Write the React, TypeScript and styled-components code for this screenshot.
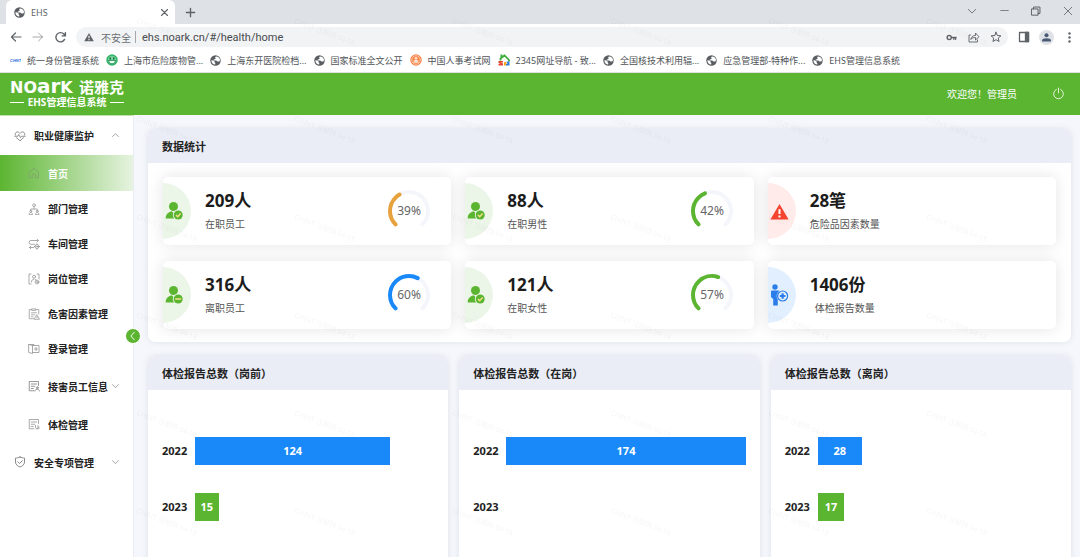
import React, { useState } from 'react';
import styled, { createGlobalStyle } from 'styled-components';

const GREEN = '#5cb531';
const BLUE = '#1989fa';
const ORANGE = '#e8a23d';
const sans = '"Noto Sans", "Noto Sans CJK SC", sans-serif';

const Global = createGlobalStyle`
  *, *::before, *::after { box-sizing: border-box; }
  body { margin: 0; font-family: ${sans}; font-size: 10px; color: #222; background: #f5f7fc; }
  button { border: 0; padding: 0; margin: 0; background: none; font: inherit; color: inherit; cursor: pointer; }
  a { color: inherit; text-decoration: none; }
  ul { list-style: none; margin: 0; padding: 0; }
  h1, h2, p { margin: 0; font: inherit; }
  svg { display: block; flex: none; }
`;

const Page = styled.div`
  position: relative;
  display: flex;
  flex-direction: column;
  height: 100vh;
  overflow: hidden;
`;

/* ---------- browser chrome ---------- */

const TabStrip = styled.div`
  display: flex;
  align-items: stretch;
  height: 24px;
  flex: none;
  padding-left: 6px;
  background: #dee1e6;
`;

const Tab = styled.div`
  display: flex;
  align-items: center;
  gap: 6px;
  width: 169px;
  padding: 0 7px 0 8px;
  border-radius: 6px 6px 0 0;
  background: #fff;
  color: #5f6368;
  font-size: 9px;
`;

const TabTitle = styled.span`
  flex: 1;
`;

const IconButton = styled.button<{ $w?: number }>`
  display: flex;
  align-items: center;
  justify-content: center;
  width: ${(p) => p.$w ?? 12}px;
  flex: none;
  color: #5f6368;
`;

const WindowControls = styled.div`
  display: flex;
  align-items: center;
  margin-left: auto;
  padding-bottom: 3px;
  margin-right: -4px;
`;

const Toolbar = styled.div`
  display: flex;
  align-items: center;
  height: 25px;
  flex: none;
  padding: 1px 0 0 4px;
  background: #fff;
`;

const AddressBar = styled.div`
  display: flex;
  align-items: center;
  flex: 1;
  height: 20px;
  margin: 0 4px 0 4px;
  padding: 0 1px 0 8px;
  border-radius: 10px;
  background: #f1f3f4;
  color: #6b6f74;
`;

const Insecure = styled.label`
  display: flex;
  align-items: center;
  gap: 7px;
  white-space: nowrap;

  &::after {
    content: '';
    width: 1px;
    height: 12px;
    background: #a5a8ab;
    margin-left: -3px;
  }
`;

const UrlInput = styled.input`
  flex: 1;
  min-width: 0;
  border: 0;
  outline: 0;
  padding: 0;
  margin-left: 6px;
  background: transparent;
  color: #484b4f;
  font: 11px Roboto, ${sans};
`;

const Avatar = styled.span`
  display: flex;
  align-items: center;
  justify-content: center;
  width: 15px;
  height: 15px;
  border-radius: 50%;
  background: #dee1e6;
  color: #4b5a74;
`;

const Bookmarks = styled.nav`
  display: flex;
  align-items: center;
  gap: 7px;
  height: 24px;
  flex: none;
  padding: 0 10px 1px;
  border-bottom: 1px solid #dcdee0;
  background: #fff;
`;

const Bookmark = styled.a`
  display: flex;
  align-items: center;
  gap: 6px;
  white-space: nowrap;
  color: #505357;
  font-size: 9px;
`;

/* ---------- application frame ---------- */

const Header = styled.header`
  display: flex;
  align-items: center;
  height: 42px;
  flex: none;
  padding: 0 15px 1px 10px;
  background: ${GREEN};
  color: #fff;
`;

const Brand = styled.h1`
  display: flex;
  flex-direction: column;
  gap: 1px;
  width: 114px;
`;

const BrandTop = styled.span`
  display: flex;
  align-items: center;
  justify-content: space-between;
  height: 16px;
  line-height: 16px;
  font-size: 15px;
  font-weight: 700;
  white-space: nowrap;
`;

const Wordmark = styled.span`
  font-family: "DejaVu Sans", sans-serif;
  font-size: 16px;
`;

const TallLetters = styled.span`
  font-size: 20px;
  line-height: 16px;
`;

const BrandSub = styled.span`
  display: flex;
  align-items: center;
  gap: 4px;
  height: 13px;
  font-weight: 700;
  line-height: 13px;
  white-space: nowrap;

  &::before, &::after {
    content: '';
    flex: 1;
    height: 1px;
    background: #fff;
  }
`;

const Welcome = styled.span`
  margin-left: auto;
  margin-right: 35px;
`;

const Body = styled.div`
  display: flex;
  flex: 1;
  min-height: 0;
`;

const Sidebar = styled.aside`
  position: relative;
  width: 134px;
  flex: none;
  background: #fff;
  border-top: 1px solid #bfe2ad;
  border-right: 1px solid #e9ecf3;
`;

const GroupButton = styled.button<{ $h: number; $inset?: boolean }>`
  display: flex;
  align-items: center;
  gap: 8px;
  width: 100%;
  height: ${(p) => p.$h}px;
  padding: 0 13px 0 ${(p) => (p.$inset ? 28 : 14)}px;
  font-weight: 700;
  text-align: left;
  white-space: nowrap;

  & > svg { color: #858585; }
  & > span { flex: 1; min-width: 0; }
`;

const NavLink = styled.a<{ $active?: boolean; $tall?: boolean }>`
  display: flex;
  align-items: center;
  gap: 8px;
  height: ${(p) => (p.$tall ? 38 : p.$active ? 36 : 35)}px;
  padding-left: 28px;
  font-weight: 700;
  color: ${(p) => (p.$active ? '#fff' : '#222')};
  background: ${(p) => (p.$active ? `linear-gradient(90deg, ${GREEN}, #e6f3e0)` : 'none')};

  & > svg { color: ${(p) => (p.$active ? '#7fa56d' : '#9a9a9a')}; }
`;

const SubList = styled.ul`
  padding-bottom: 1px;
`;

const Collapse = styled.button`
  position: absolute;
  top: 212px;
  right: -8px;
  z-index: 2;
  display: flex;
  align-items: center;
  justify-content: center;
  width: 16px;
  height: 16px;
  border: 1px solid #fff;
  border-radius: 50%;
  background: ${GREEN};
  color: #fff;
`;

const Main = styled.main`
  display: flex;
  flex-direction: column;
  gap: 14px;
  flex: 1;
  min-width: 0;
  padding: 14px 9px 14px 14px;
  overflow-y: auto;
  scrollbar-width: none;
  background: #f5f7fc;
`;

const Panel = styled.section`
  flex: none;
  border-radius: 7px;
  overflow: hidden;
  background: #fff;
  box-shadow: 0 0 6px rgba(60, 70, 100, 0.12);
`;

const PanelTitle = styled.h2`
  height: 34px;
  padding: 0 14px;
  line-height: 36px;
  font-size: 11px;
  font-weight: 700;
  background: #eaedf6;
`;

const StatGrid = styled.div`
  display: grid;
  grid-template-columns: repeat(3, 1fr);
  gap: 16px 14px;
  padding: 14px 15px 13px 15px;
`;

const StatCard = styled.article`
  display: flex;
  align-items: center;
  height: 68px;
  padding-right: 20px;
  border-radius: 5px;
  background: #fff;
  box-shadow: 0 0 16px rgba(0, 0, 0, 0.11);
`;

const HalfDisc = styled.div<{ $tint: string }>`
  display: flex;
  align-items: center;
  width: 28px;
  height: 56px;
  padding-left: 2px;
  border-radius: 0 28px 28px 0;
  background: ${(p) => p.$tint};
`;

const StatText = styled.div`
  flex: 1;
  margin-left: 14px;
`;

const StatValue = styled.p`
  line-height: 24px;
  font-size: 17px;
  font-weight: 700;
  color: #1c1c1c;
`;

const StatLabel = styled.p`
  margin-top: 2px;
  line-height: 18px;
  color: #555;
`;

const ChartRow = styled.div`
  display: grid;
  grid-template-columns: repeat(3, 1fr);
  gap: 11px;
  flex: none;
`;

const Chart = styled.div`
  display: flex;
  flex-direction: column;
  gap: 28px;
  min-height: 240px;
  padding: 47px 14px;
`;

const BarRow = styled.div`
  display: flex;
  height: 28px;
  line-height: 28px;
  font-size: 11px;
  font-weight: 700;
`;

const Year = styled.span`
  width: 33px;
  flex: none;
`;

const Track = styled.div`
  flex: 1;
`;

const Bar = styled.div<{ $color: string }>`
  text-align: center;
  color: #fff;
  background: ${(p) => p.$color};
`;

const Watermarks = styled.div`
  position: absolute;
  inset: 0 0 0 137px;
  z-index: 3;
  display: grid;
  grid-template-columns: repeat(6, 158px);
  grid-auto-rows: 98px;
  padding-top: 12px;
  overflow: hidden;
  pointer-events: none;
  color: rgba(0, 0, 0, 0.045);
  font-size: 7px;
  white-space: nowrap;
`;

const Mark = styled.span`
  justify-self: start;
  align-self: start;
  transform: rotate(21deg);
  transform-origin: 0 50%;
  margin-top: 3px;
`;

/* ---------- icons ---------- */

type GlyphProps = { size?: number; sw?: number; children: React.ReactNode };
const Glyph = ({ size = 12, sw = 2, children }: GlyphProps) => (
  <svg width={size} height={size} viewBox="0 0 24 24" fill="none" stroke="currentColor"
    strokeWidth={sw} strokeLinecap="round" strokeLinejoin="round" aria-hidden="true">{children}</svg>
);

const Globe = () => (
  <svg width="11" height="11" viewBox="0 0 22 22" aria-hidden="true">
    <circle cx="11" cy="11" r="10.5" fill="#5a5e63" />
    <path d="M12 3c-2 1-2 2-1 3 1 1-1 3-3 3-1 0-1 2 1 2h3c2 0 2 2 3 2l3 0c1.5-.4 2-1.800 2-3.500C19.500 6 16.500 3 12 3z" fill="#fff" />
    <path d="M2.800 10.500c2 .2 5 .8 6 2 1 1.300-.2 2 1 3 1.200.8.800 2.500.4 3.700C6 18.800 2.700 15.500 2.800 10.500z" fill="#fff" />
  </svg>
);

const Chint = () => (
  <svg width="11" height="11" viewBox="0 0 11 11" aria-hidden="true">
    <text x="0" y="7" fontSize="4" fontWeight="700" fontStyle="italic" fontFamily="Liberation Sans, sans-serif" fill="#1766d6">CHNT</text>
  </svg>
);

const Smiley = () => (
  <svg width="12" height="12" viewBox="0 0 24 24" aria-hidden="true">
    <circle cx="12" cy="12" r="11.500" fill="#36b56c" />
    <circle cx="12" cy="12" r="8" fill="#7bd39f" />
    <path d="M7 7h3v4H7zM14 7h3v4h-3z" fill="#11683a" />
    <path d="M5 13h14c-1 5-4 6.500-7 6.500S6 18 5 13z" fill="#eafff2" stroke="#168349" strokeWidth="1.500" />
  </svg>
);

const OrangeSeal = () => (
  <svg width="12" height="12" viewBox="0 0 24 24" aria-hidden="true">
    <circle cx="12" cy="12" r="11.500" fill="#f58549" />
    <circle cx="12" cy="12" r="8.500" fill="none" stroke="#ffd3b8" strokeWidth="1.500" />
    <circle cx="12" cy="8.500" r="2.500" fill="#ffe3d2" />
    <path d="M7 17l3-5h4l3 5zM6 12l3 1M18 12l-3 1" fill="#ffe3d2" stroke="#ffe3d2" />
  </svg>
);

const House2345 = () => (
  <svg width="12" height="12" viewBox="0 0 24 24" aria-hidden="true">
    <path d="M5 13V9l8-6 9 9v3" fill="none" stroke="#3eac38" strokeWidth="3.500" />
    <path d="M5 1h4v5H5z" fill="#3eac38" />
    <path d="M1 14h9v3H5l5 2v4H1v-3h4l-4-2z" fill="#e5452f" />
    <path d="M12 16h5v7h-5z" fill="#f6a71c" />
    <path d="M17 15h6v8h-7v-3h3z" fill="#2e7ddb" />
  </svg>
);

const Warning = ({ size, color }: { size: number; color: string }) => (
  <svg width={size} height={size} viewBox="0 0 24 24" aria-hidden="true">
    <path d="M12 2.500L23.500 22H.5z" fill={color} strokeLinejoin="round" />
    <path d="M12 9v6" stroke="#fff" strokeWidth="2.600" />
    <path d="M12 17v2.600" stroke="#fff" strokeWidth="2.600" />
  </svg>
);

const Chevron = ({ up }: { up?: boolean }) => (
  <Glyph size={9} sw={2}><path d={up ? 'M4 15l8-8 8 8' : 'M4 7l8 8 8-8'} /></Glyph>
);

const HeartIcon = () => (
  <Glyph size={12} sw={1.800}>
    <path d="M2.500 10C1.500 5 6 2.500 9 4.200c1.300.7 2.200 1.600 3 2.500.8-.9 1.700-1.800 3-2.500 3-1.700 7.500.8 6.500 5.800" />
    <path d="M1.500 12.500h6l2-3.500 3.500 6.500 2-3h7.500" />
    <path d="M5 15.500l7 6 7-6" />
  </Glyph>
);
const HomeIcon = () => (
  <Glyph sw={1.800}><path d="M3 10l9-7.500 9 7.500v11.500h-5.500V17a3.500 3.500 0 0 0-7 0v4.500H3z" /></Glyph>
);
const DeptIcon = () => (
  <Glyph sw={1.600}>
    <circle cx="12" cy="4.500" r="2.800" /><path d="M12 7.500V12M5.500 15v-3h13v3" />
    <circle cx="5.500" cy="16.500" r="2" /><path d="M2 22.500c0-5 7-5 7 0z" />
    <circle cx="18.500" cy="16.500" r="2" /><path d="M15 22.500c0-5 7-5 7 0z" />
  </Glyph>
);
const WorkshopIcon = () => (
  <Glyph sw={1.700}>
    <path d="M20 5H6a3.800 3.800 0 0 0 0 7.600h7M18 2.500L21 5l-3 2.500M3 19h8M5.500 16.500L3 19l2.500 2.500" />
    <circle cx="18" cy="17" r="4" /><circle cx="18" cy="17" r="1" />
    <path d="M18 11.500V13M18 21v1.500M12.500 17H14M22 17h1.500" />
  </Glyph>
);
const PostIcon = () => (
  <Glyph sw={1.700}>
    <path d="M6 2H2v20h4M18 2h4v10" /><circle cx="12" cy="7.500" r="3" />
    <path d="M7 18c0-3.500 1.500-5.500 4.500-5.500" /><circle cx="18" cy="18" r="3.800" /><circle cx="18" cy="18" r=".8" />
    <path d="M15 12.500l1 1.500" />
  </Glyph>
);
const HazardIcon = () => (
  <Glyph sw={1.600}>
    <path d="M7 3H2.500v18.500H11M17 3h4.500v9M8 1.800h8v3H8zM7 9.500h10M7 13.500h6M7 17.500h3" />
    <path d="M18 14l5 8.500H13zM18 17.500v2" />
  </Glyph>
);
const LoginIcon = () => (
  <Glyph sw={1.700}>
    <path d="M2 3l7 2v16l-7-2zM9 5h13v14H9M2 3h10v2M13 12h6M16 9v6" />
  </Glyph>
);
const InfoIcon = () => (
  <Glyph sw={1.700}>
    <path d="M21 11V3H2.500v18.500H12M6.500 8h11M6.500 12.500h7M6.500 17h4" />
    <circle cx="18.500" cy="15.500" r="2" /><path d="M14 22c.5-5 8.500-5 9 0" />
  </Glyph>
);
const ExamIcon = () => (
  <Glyph sw={1.700}>
    <path d="M21 11V3H2.500v18.500H12M6.500 8h11M6.500 12.500h7M6.500 17h4" />
    <path d="M15 15v3.500a2.500 2.500 0 0 0 5 0V15M17.500 21.500H22V18" />
  </Glyph>
);
const ShieldIcon = () => (
  <Glyph size={12} sw={1.900}>
    <path d="M12 2c3 1.500 6 2 9 2v8c0 5-4.500 8.500-9 10-4.500-1.500-9-5-9-10V4c3 0 6-.5 9-2z" /><path d="M7.500 11.500l3.500 3.500 6-6" />
  </Glyph>
);

const PersonIcon = ({ minus }: { minus?: boolean }) => (
  <svg width="20" height="20" viewBox="0 0 20 20" aria-hidden="true">
    <circle cx="8.500" cy="5.500" r="4.500" fill={GREEN} />
    <path d="M.7 17.500c0-4 2.300-6.200 5.800-7.200l2.500 2h3.500l-3 5.200z" fill={GREEN} />
    <circle cx="13.200" cy="14" r="5.400" fill="#ebf6e9" />
    <circle cx="13.200" cy="14" r="4.500" fill={GREEN} />
    <path d={minus ? 'M10.200 14h6' : 'M11 14l1.700 1.700 2.900-3.200'} fill="none" stroke="#f7e08a" strokeWidth="1.500" />
  </svg>
);

const ReportIcon = () => (
  <svg width="19" height="22" viewBox="0 0 19 22" aria-hidden="true">
    <circle cx="5" cy="3" r="2.700" fill="#2b7de9" />
    <path d="M1 7.500q0-1 1-1h6.500q1 0 1 1V13l-1.700 2v6q0 .5-.5.500H3.700q-.5 0-.5-.5v-6L1 13z" fill="#2b7de9" />
    <circle cx="12.600" cy="12" r="6" fill="#e1efff" />
    <circle cx="12.600" cy="12" r="5" fill="none" stroke="#2b7de9" strokeWidth="1.200" />
    <path d="M12.600 9.200v5.600M9.800 12h5.600" stroke="#2b7de9" strokeWidth="2.200" />
  </svg>
);

const GaugeText = styled.text`
  font: 12px ${sans};
  fill: #666;
`;

const Gauge = ({ value, color }: { value: number; color: string }) => {
  const arc = 'M8.560 35.440 A19 19 0 1 1 35.440 35.440';
  return (
    <svg width="44" height="44" viewBox="0 0 44 44" role="img" aria-label={`${value}%`}>
      <path d={arc} fill="none" stroke="#f4f6fb" strokeWidth="4" strokeLinecap="round" />
      <path d={arc} fill="none" stroke={color} strokeWidth="4" strokeLinecap="round"
        pathLength={100} strokeDasharray={`${value} 200`} />
      <GaugeText x="22" y="26" textAnchor="middle">{value}%</GaugeText>
    </svg>
  );
};

/* ---------- data ---------- */

const bookmarks: [React.ReactNode, string][] = [
  [<Chint />, '统一身份管理系统'],
  [<Smiley />, '上海市危险废物管...'],
  [<Globe />, '上海东开医院检档...'],
  [<Globe />, '国家标准全文公开'],
  [<OrangeSeal />, '中国人事考试网'],
  [<House2345 />, '2345网址导航 - 致...'],
  [<Globe />, '全国核技术利用辐...'],
  [<Globe />, '应急管理部-特种作...'],
  [<Globe />, 'EHS管理信息系统'],
];

const navItems: [React.ReactNode, string][] = [
  [<HomeIcon />, '首页'],
  [<DeptIcon />, '部门管理'],
  [<WorkshopIcon />, '车间管理'],
  [<PostIcon />, '岗位管理'],
  [<HazardIcon />, '危害因素管理'],
  [<LoginIcon />, '登录管理'],
];

type Stat = { value: string; label: string; tint: string; icon: React.ReactNode; pct?: number; color?: string };
const stats: Stat[] = [
  { value: '209人', label: '在职员工', tint: '#ebf6e9', icon: <PersonIcon />, pct: 39, color: ORANGE },
  { value: '88人', label: '在职男性', tint: '#ebf6e9', icon: <PersonIcon />, pct: 42, color: GREEN },
  { value: '28笔', label: '危险品因素数量', tint: '#ffebea', icon: <Warning size={19} color="#f5432f" /> },
  { value: '316人', label: '离职员工', tint: '#ebf6e9', icon: <PersonIcon minus />, pct: 60, color: BLUE },
  { value: '121人', label: '在职女性', tint: '#ebf6e9', icon: <PersonIcon />, pct: 57, color: GREEN },
  { value: '1406份', label: '\u2002体检报告数量', tint: '#e1efff', icon: <ReportIcon /> },
];

const FULL_SCALE = 152;
const charts: { title: string; bars: [string, number, string][] }[] = [
  { title: '体检报告总数（岗前）', bars: [['2022', 124, BLUE], ['2023', 15, GREEN]] },
  { title: '体检报告总数（在岗）', bars: [['2022', 174, BLUE], ['2023', 0, GREEN]] },
  { title: '体检报告总数（离岗）', bars: [['2022', 28, BLUE], ['2023', 17, GREEN]] },
];

export default function App() {
  const [url, setUrl] = useState('ehs.noark.cn/#/health/home');
  return (
    <Page>
      <Global />
      <TabStrip>
        <Tab>
          <Globe />
          <TabTitle>EHS</TabTitle>
          <IconButton $w={8} aria-label="关闭标签页"><Glyph size={9} sw={3}><path d="M4 4l16 16M20 4L4 20" /></Glyph></IconButton>
        </Tab>
        <IconButton $w={31} aria-label="新标签页"><Glyph size={11} sw={3}><path d="M12 3v18M3 12h18" /></Glyph></IconButton>
        <WindowControls>
          <IconButton $w={32} aria-label="搜索标签页"><Glyph size={10}><path d="M3 8l9 9 9-9" /></Glyph></IconButton>
          <IconButton $w={32} aria-label="最小化"><Glyph size={9}><path d="M2 12h20" /></Glyph></IconButton>
          <IconButton $w={32} aria-label="还原"><Glyph size={10} sw={2.400}><path d="M2 7h15v15H2zM6 7V2.500h15.500V18H17" /></Glyph></IconButton>
          <IconButton $w={32} aria-label="关闭"><Glyph size={10}><path d="M3 3l18 18M21 3L3 21" /></Glyph></IconButton>
        </WindowControls>
      </TabStrip>

      <Toolbar>
        <IconButton $w={23} aria-label="后退"><Glyph size={12} sw={2.400}><path d="M22 12H3M11 4l-8 8 8 8" /></Glyph></IconButton>
        <IconButton $w={22} aria-label="前进" disabled><Glyph size={12} sw={1.600}><path d="M2 12h19M13 4l8 8-8 8" opacity=".7" /></Glyph></IconButton>
        <IconButton $w={23} aria-label="刷新"><Glyph size={13} sw={2.600}><path d="M19.500 15.500a8.500 8.500 0 1 1-1-9.500l2 2.500M21 3v6h-6" /></Glyph></IconButton>
        <AddressBar>
          <Insecure htmlFor="url"><Warning size={10} color="#5f6368" />不安全</Insecure>
          <UrlInput id="url" value={url} onChange={(e) => setUrl(e.target.value)} />
          <IconButton $w={23} aria-label="密码">
            <Glyph size={11} sw={3}><circle cx="7" cy="12" r="4.500" /><path d="M12 12h10M17 12v4M21 12v4" /></Glyph>
          </IconButton>
          <IconButton $w={22} aria-label="分享">
            <Glyph size={12} sw={1.800}><path d="M5 8H2v14h17v-4M6 16c1-5 4-7 9-7V4l7 7.500-7 6.500v-5c-4 0-6 .5-9 3z" /></Glyph>
          </IconButton>
          <IconButton $w={22} aria-label="收藏">
            <Glyph size={12}><path d="M12 2.500l2.800 6.500 7 .6-5.300 4.600 1.600 6.800-6.100-3.600L5.900 21l1.600-6.800L2.200 9.600l7-.6z" /></Glyph>
          </IconButton>
        </AddressBar>
        <IconButton $w={23} aria-label="侧边栏">
          <Glyph size={12} sw={2.600}><path d="M3 3h18v18H3z" /><path d="M15 3h6v18h-6z" fill="currentColor" /></Glyph>
        </IconButton>
        <IconButton $w={23} aria-label="用户">
          <Avatar><svg width="9" height="9" viewBox="0 0 18 18"><circle cx="9" cy="4.500" r="4" fill="currentColor" /><path d="M0 17v-2c0-6 18-6 18 0v2z" fill="currentColor" /></svg></Avatar>
        </IconButton>
        <IconButton $w={22} aria-label="更多">
          <svg width="11" height="11" viewBox="0 0 11 11" fill="currentColor"><circle cx="5.500" cy="1.500" r="1.200" /><circle cx="5.500" cy="5.500" r="1.200" /><circle cx="5.500" cy="9.500" r="1.200" /></svg>
        </IconButton>
      </Toolbar>

      <Bookmarks aria-label="书签">
        {bookmarks.map(([icon, name]) => <Bookmark key={name} href="#">{icon}{name}</Bookmark>)}
      </Bookmarks>

      <Header>
        <Brand>
          <BrandTop><Wordmark>NO<TallLetters>ar</TallLetters>K</Wordmark><span>诺雅克</span></BrandTop>
          <BrandSub>EHS管理信息系统</BrandSub>
        </Brand>
        <Welcome>欢迎您！管理员</Welcome>
        <button aria-label="退出"><Glyph size={13} sw={1.500}><path d="M8 4.500a9 9 0 1 0 8 0M12 2v9" /></Glyph></button>
      </Header>

      <Body>
        <Sidebar>
          <nav>
            <GroupButton $h={39} aria-expanded="true"><HeartIcon /><span>职业健康监护</span><Chevron up /></GroupButton>
            <SubList>
              {navItems.map(([icon, name], i) => (
                <li key={name}><NavLink href="#" $active={i === 0}>{icon}{name}</NavLink></li>
              ))}
            </SubList>
            <GroupButton $h={38} $inset aria-expanded="false"><InfoIcon /><span>接害员工信息</span><Chevron /></GroupButton>
            <NavLink href="#" $tall><ExamIcon />体检管理</NavLink>
            <GroupButton $h={38} aria-expanded="false"><ShieldIcon /><span>安全专项管理</span><Chevron /></GroupButton>
          </nav>
          <Collapse aria-label="收起菜单"><Glyph size={10} sw={2.200}><path d="M15 3l-8 9 8 9" /></Glyph></Collapse>
        </Sidebar>

        <Main>
          <Panel>
            <PanelTitle>数据统计</PanelTitle>
            <StatGrid>
              {stats.map((s) => (
                <StatCard key={s.label}>
                  <HalfDisc $tint={s.tint}>{s.icon}</HalfDisc>
                  <StatText>
                    <StatValue>{s.value}</StatValue>
                    <StatLabel>{s.label}</StatLabel>
                  </StatText>
                  {s.pct !== undefined && <Gauge value={s.pct} color={s.color ?? GREEN} />}
                </StatCard>
              ))}
            </StatGrid>
          </Panel>
          <ChartRow>
            {charts.map((c) => (
              <Panel key={c.title}>
                <PanelTitle>{c.title}</PanelTitle>
                <Chart>
                  {c.bars.map(([year, n, color]) => (
                    <BarRow key={year}>
                      <Year>{year}</Year>
                      <Track>
                        {n > 0 && <Bar $color={color} style={{ width: `${Math.min(100, (n / FULL_SCALE) * 100)}%` }}>{n}</Bar>}
                      </Track>
                    </BarRow>
                  ))}
                </Chart>
              </Panel>
            ))}
          </ChartRow>
        </Main>
      </Body>

      <Watermarks aria-hidden="true">
        {Array.from({ length: 36 }, (_, i) => <Mark key={i}>CHINT 汪丽鸽 04-18</Mark>)}
      </Watermarks>
    </Page>
  );
}
